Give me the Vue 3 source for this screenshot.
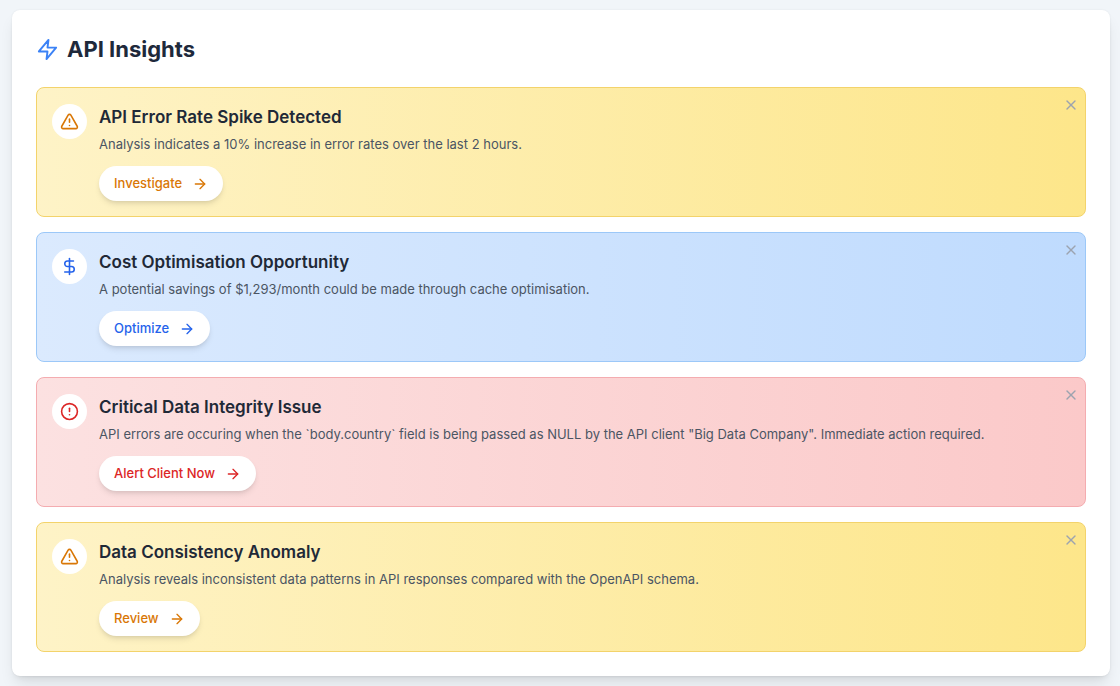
<script setup>
import { ref } from 'vue'

const insights = ref([
  {
    id: 1,
    tone: 'warning',
    icon: 'triangle',
    title: 'API Error Rate Spike Detected',
    text: 'Analysis indicates a 10% increase in error rates over the last 2 hours.',
    action: 'Investigate',
  },
  {
    id: 2,
    tone: 'info',
    icon: 'dollar',
    title: 'Cost Optimisation Opportunity',
    text: 'A potential savings of $1,293/month could be made through cache optimisation.',
    action: 'Optimize',
  },
  {
    id: 3,
    tone: 'danger',
    icon: 'circle',
    title: 'Critical Data Integrity Issue',
    text: 'API errors are occuring when the `body.country` field is being passed as NULL by the API client "Big Data Company". Immediate action required.',
    action: 'Alert Client Now',
  },
  {
    id: 4,
    tone: 'warning',
    icon: 'triangle',
    title: 'Data Consistency Anomaly',
    text: 'Analysis reveals inconsistent data patterns in API responses compared with the OpenAPI schema.',
    action: 'Review',
  },
])

function dismiss(id) {
  insights.value = insights.value.filter((item) => item.id !== id)
}
</script>

<template>
  <main class="page">
    <section class="panel">
      <h1 class="heading">
        <svg class="bolt" viewBox="0 0 24 24" aria-hidden="true">
          <polygon points="13 2 3 14 12 14 11 22 21 10 12 10 13 2" />
        </svg>
        API Insights
      </h1>

      <div class="list">
        <article v-for="item in insights" :key="item.id" class="insight" :class="item.tone">
          <span class="badge">
            <svg viewBox="0 0 24 24" aria-hidden="true">
              <template v-if="item.icon === 'triangle'">
                <path d="m21.73 18-8-14a2 2 0 0 0-3.48 0l-8 14A2 2 0 0 0 4 21h16a2 2 0 0 0 1.73-3Z" />
                <path d="M12 9v4" />
                <path d="M12 17h.01" />
              </template>
              <template v-else-if="item.icon === 'dollar'">
                <path d="M12 2v20" />
                <path d="M17 5H9.5a3.5 3.5 0 0 0 0 7h5a3.5 3.5 0 0 1 0 7H6" />
              </template>
              <template v-else>
                <circle cx="12" cy="12" r="10" />
                <path d="M12 8v4" />
                <path d="M12 16h.01" />
              </template>
            </svg>
          </span>
          <div class="body">
            <h2 class="title">{{ item.title }}</h2>
            <p class="text">{{ item.text }}</p>
            <button type="button" class="action">
              {{ item.action }}
              <svg viewBox="0 0 24 24" aria-hidden="true">
                <path d="M5 12h14" />
                <path d="m12 5 7 7-7 7" />
              </svg>
            </button>
          </div>
          <button type="button" class="close" aria-label="Dismiss" @click="dismiss(item.id)">
            <svg viewBox="0 0 24 24" aria-hidden="true">
              <path d="M18 6 6 18" />
              <path d="m6 6 12 12" />
            </svg>
          </button>
        </article>
      </div>
    </section>
  </main>
</template>

<style>
body {
  background: #f1f5f9;
}
</style>

<style scoped>
.page {
  padding: 10px 10px 10px 12px;
  font-family: Inter, "Liberation Sans", sans-serif;
}

svg {
  display: block;
  flex: none;
  fill: none;
  stroke: currentColor;
  stroke-width: 2;
  stroke-linecap: round;
  stroke-linejoin: round;
}

.panel {
  padding: 24px;
  border-radius: 8px;
  background: #fff;
  box-shadow: 0 0 2px rgb(0 0 0 / 0.08), 0 10px 15px -3px rgb(0 0 0 / 0.1), 0 4px 6px -4px rgb(0 0 0 / 0.1);
}

.heading {
  display: flex;
  align-items: center;
  gap: 8px;
  margin: 0 0 23px;
  font-size: 22px;
  font-weight: 700;
  line-height: 30px;
  color: #1e293b;
}

.bolt {
  width: 23px;
  height: 23px;
  color: #3b82f6;
}

.list {
  display: grid;
  gap: 15px;
}

.insight {
  position: relative;
  display: flex;
  align-items: flex-start;
  gap: 12px;
  padding: 16px 15px 15px;
  border: 1px solid;
  border-radius: 8px;
}

.warning {
  --tone: #d97706;
  border-color: #f3d36b;
  background: linear-gradient(to right, #fef3c7, #fde68a);
}

.info {
  --tone: #2563eb;
  border-color: #9cc8f8;
  background: linear-gradient(to right, #dbeafe, #bfdbfe);
}

.danger {
  --tone: #dc2626;
  border-color: #f4acb0;
  background: linear-gradient(to right, #fce1e1, #fbc9c9);
}

.badge {
  display: flex;
  padding: 8px;
  border-radius: 50%;
  background: #fff;
  color: var(--tone);
}

.badge svg {
  width: 19px;
  height: 19px;
}

.body {
  flex: 1;
  min-width: 0;
}

.title {
  margin: 0;
  font-size: 17px;
  font-weight: 600;
  line-height: 27px;
  color: #1f2937;
}

.text {
  margin: 3px 0 12px;
  font-size: 13px;
  line-height: 20px;
  color: #4b5563;
}

.action {
  display: flex;
  align-items: center;
  gap: 10px;
  padding: 8px 15px;
  border: 0;
  border-radius: 18px;
  background: #fff;
  box-shadow: 0 4px 6px -1px rgb(0 0 0 / 0.1), 0 2px 4px -2px rgb(0 0 0 / 0.1);
  color: var(--tone);
  font-family: inherit;
  font-size: 13px;
  font-weight: 500;
  line-height: 19px;
  cursor: pointer;
}

.action svg {
  width: 16px;
  height: 16px;
}

.close {
  position: absolute;
  top: 9px;
  right: 6px;
  padding: 0;
  border: 0;
  background: none;
  color: #9ca3af;
  cursor: pointer;
}

.close svg {
  width: 16px;
  height: 16px;
}
</style>
